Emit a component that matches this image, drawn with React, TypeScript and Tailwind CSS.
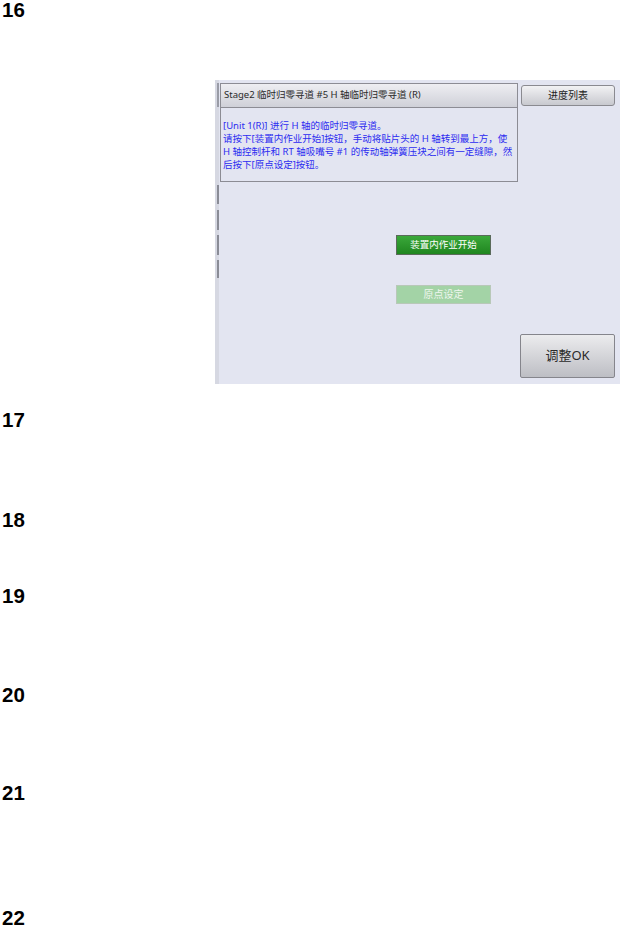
import React from 'react';

const cjk = "font-['Noto_Sans','Noto_Sans_CJK_SC',sans-serif]";

const StepNo = ({ n }: { n: number }) => (
  <div className="h-[20px] pl-[2px] font-['Liberation_Sans',Arial,sans-serif] text-[20.5px] font-bold leading-[20px] text-black">
    {n}
  </div>
);

const Screen = () => (
  <div className={`flex h-[304px] w-[405px] bg-[#e3e5f1] ${cjk}`}>
    {/* left edge strip with the tab marks */}
    <div className="flex w-[4px] flex-col bg-[#d6d8e2]">
      <div className="mt-[3px] h-[24px] w-[2px] self-end bg-[#9a9ca6]" />
      <div className="mt-[78px] h-[19px] w-[2px] self-end bg-[#8a8c96]" />
      <div className="mt-[6px] h-[20px] w-[2px] self-end bg-[#8a8c96]" />
      <div className="mt-[5px] h-[20px] w-[2px] self-end bg-[#8a8c96]" />
      <div className="mt-[5px] h-[18px] w-[2px] self-end bg-[#8a8c96]" />
    </div>

    <div className="flex flex-1 flex-col pt-[3px]">
      <div className="flex">
        <div className="ml-px w-[298px]">
          <div className="flex h-[25px] items-center border border-[#8c8c94] bg-gradient-to-b from-[#eeeef2] to-[#cfd0d8] pl-[3px] text-[9.5px] text-[#2a2a2a]">
            Stage2 临时归零寻道 #5 H 轴临时归零寻道 (R)
          </div>
          <div className="h-[74px] border border-t-0 border-[#8c8c94] bg-[#e3e5f1] pl-[2px] pt-[11px] text-[9.5px] leading-[13px] whitespace-nowrap text-[#2c2cf0]">
            <div>[Unit 1(R)] 进行 H 轴的临时归零寻道。</div>
            <div>请按下[装置内作业开始]按钮，手动将贴片头的 H 轴转到最上方，使</div>
            <div>H 轴控制杆和 RT 轴吸嘴号 #1 的传动轴弹簧压块之间有一定缝隙，然</div>
            <div>后按下[原点设定]按钮。</div>
          </div>
        </div>
        <button
          type="button"
          className="ml-[3px] mt-[2px] flex h-[21px] w-[94px] items-center justify-center rounded-[3px] border border-[#8a8a90] bg-gradient-to-b from-[#f2f2f4] to-[#c8c9cf] text-[10px] text-[#222]"
        >
          进度列表
        </button>
      </div>

      <button
        type="button"
        className="ml-[177px] mt-[53px] flex h-[20px] w-[95px] items-center justify-center border border-[#5a6a5a] bg-gradient-to-b from-[#3aa83a] to-[#1f861f] text-[9.5px] text-white"
      >
        装置内作业开始
      </button>

      <button
        type="button"
        className="ml-[177px] mt-[30px] flex h-[19px] w-[95px] items-center justify-center border border-[#b8c8b8] bg-[#a3d3a6] text-[10px] text-[#eef6ee]"
      >
        原点设定
      </button>

      <button
        type="button"
        className="ml-[301px] mt-[30px] flex h-[44px] w-[95px] items-center justify-center rounded-[2px] border border-[#85858c] bg-gradient-to-b from-[#ececee] to-[#bdbec4] text-[13px] text-[#2a2a2a]"
      >
        调整OK
      </button>
    </div>
  </div>
);

export default function App() {
  return (
    <div className="relative h-[927px] w-[622px] overflow-hidden bg-white">
      <StepNo n={16} />
      <div className="ml-[215px] mt-[60px]">
        <Screen />
      </div>
      <div className="mt-[26px]"><StepNo n={17} /></div>
      <div className="mt-[80px]"><StepNo n={18} /></div>
      <div className="mt-[56px]"><StepNo n={19} /></div>
      <div className="mt-[79px]"><StepNo n={20} /></div>
      <div className="mt-[78px]"><StepNo n={21} /></div>
      <div className="mt-[105px]"><StepNo n={22} /></div>
    </div>
  );
}
